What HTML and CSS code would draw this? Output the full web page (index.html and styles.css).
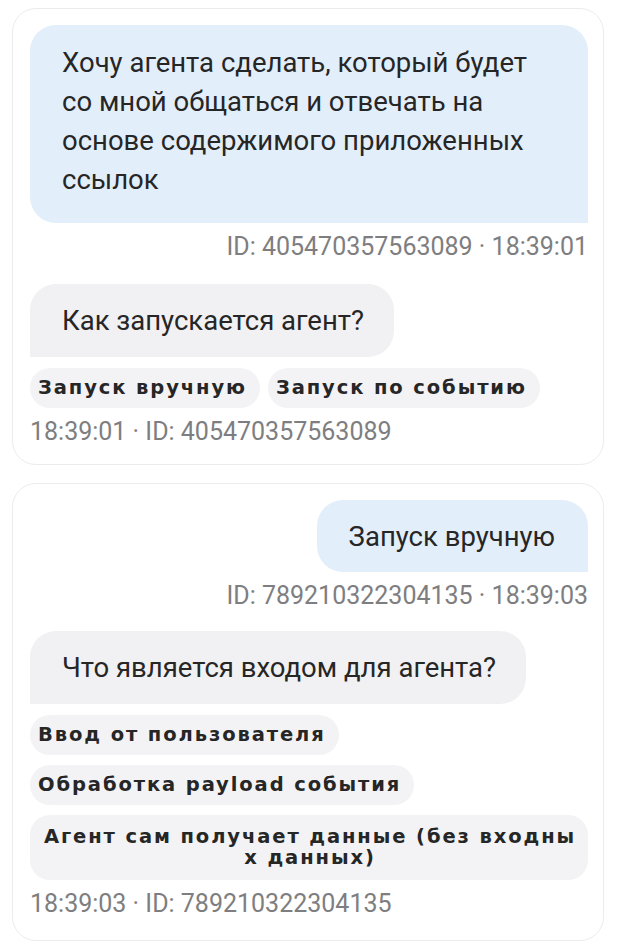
FILE: index.html
```html
<!DOCTYPE html>
<html lang="ru">
<head>
<meta charset="utf-8">
<title>Chat</title>
<link rel="stylesheet" href="styles.css">
</head>
<body>
<div class="page">
  <section class="card card-1">
    <div class="msg msg-user">
      <div class="bubble bubble-user bubble-long">Хочу агента сделать, который будет со мной общаться и отвечать на основе содержимого приложенных ссылок</div>
      <div class="meta meta-right">ID: 405470357563089 · 18:39:01</div>
    </div>
    <div class="msg msg-bot">
      <div class="bubble bubble-bot">Как запускается агент?</div>
      <div class="chips">
        <span class="chip">Запуск вручную</span>
        <span class="chip">Запуск по событию</span>
      </div>
      <div class="meta">18:39:01 · ID: 405470357563089</div>
    </div>
  </section>
  <section class="card card-2">
    <div class="msg msg-user">
      <div class="bubble bubble-user">Запуск вручную</div>
      <div class="meta meta-right">ID: 789210322304135 · 18:39:03</div>
    </div>
    <div class="msg msg-bot msg-bot-2">
      <div class="bubble bubble-bot">Что является входом для агента?</div>
      <div class="chips">
        <span class="chip">Ввод от пользователя</span>
        <span class="chip">Обработка payload события</span>
        <span class="chip chip-wide">Агент сам получает данные (без входных данных)</span>
      </div>
      <div class="meta">18:39:03 · ID: 789210322304135</div>
    </div>
  </section>
</div>
</body>
</html>
```

FILE: styles.css
```css
* { box-sizing: border-box; }
html, body { margin: 0; padding: 0; background: #ffffff; }
body {
  font-family: Roboto, "Liberation Sans", sans-serif;
  color: #262626;
}
.page {
  padding: 8px 18px 10px 12px;
  display: flex;
  flex-direction: column;
  gap: 18px;
}
.card {
  border: 1px solid #ececef;
  border-radius: 24px;
  padding: 16px 15px 20px 17px;
  display: flex;
  flex-direction: column;
}
.card-2 { padding-bottom: 24px; }
.msg { display: flex; flex-direction: column; }
.msg-user { align-items: flex-end; }
.msg-bot { align-items: flex-start; margin-top: 25px; }
.msg-bot-2 { margin-top: 23px; }
.bubble {
  font-size: 27.5px;
  line-height: 39px;
}
.bubble-user {
  background: #e3eefb;
  border-radius: 26px 26px 0 26px;
  padding: 17px 33px 16px 32px;
}
.bubble-long {
  padding: 18px 50px 24px 32px;
}
.bubble-bot {
  background: #f1f1f3;
  border-radius: 26px 26px 26px 0;
  padding: 17px 30px 17px 32px;
}
.meta {
  font-size: 25px;
  line-height: 24px;
  color: #7e7e80;
  margin-top: 12px;
}
.meta-right { text-align: right; }
.chips {
  display: flex;
  flex-wrap: wrap;
  gap: 10px 8px;
  margin-top: 11px;
}
.chip {
  font-family: "DejaVu Sans", sans-serif;
  font-weight: bold;
  font-size: 19.5px;
  line-height: 20px;
  letter-spacing: 1.9px;
  background: #f3f3f5;
  border-radius: 20px;
  padding: 10px 13px 10px 8px;
  color: #262626;
}
.chip-wide {
  text-align: center;
  word-break: break-all;
  padding: 11px 10px 12px 12px;
  line-height: 21px;
}
.chips + .meta { margin-top: 12px; }
```
